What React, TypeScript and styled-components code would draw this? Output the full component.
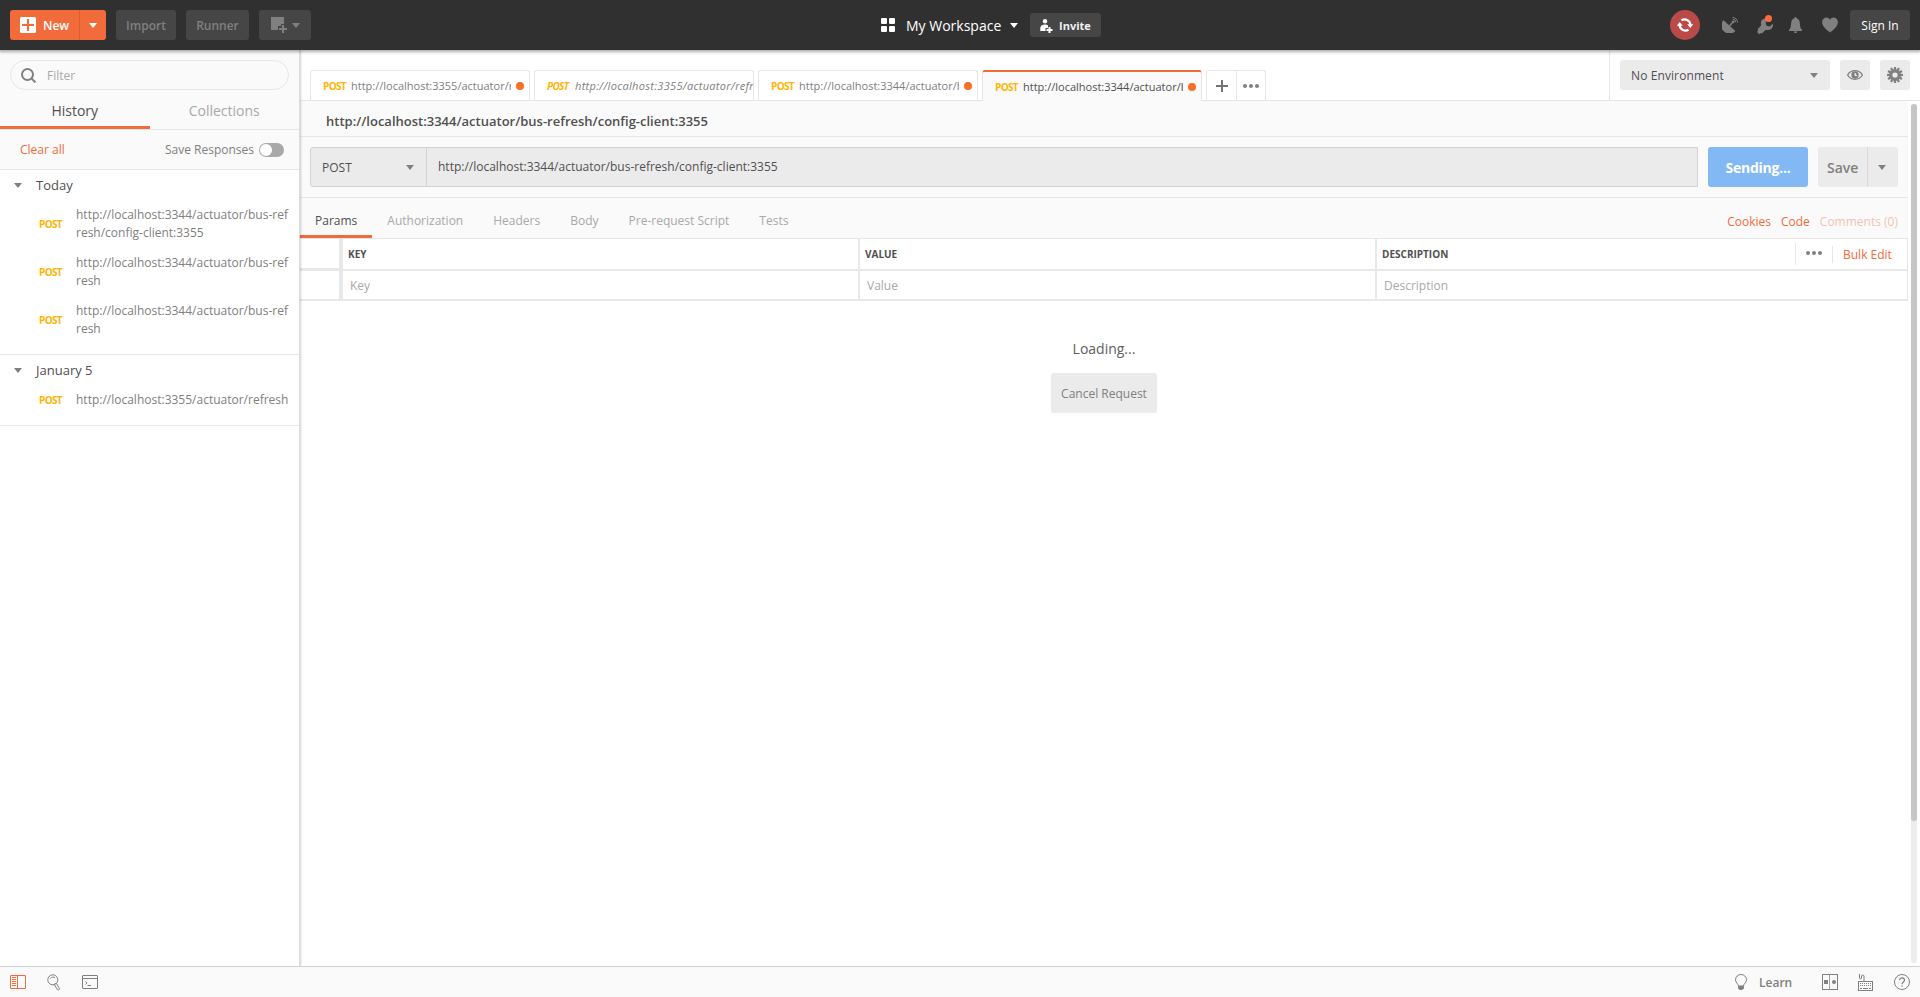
import React from 'react';
import styled, { createGlobalStyle, css } from 'styled-components';

const ORANGE = '#f26b3a';
const LINE = '#e6e6e6';

const Global = createGlobalStyle`
  * { box-sizing: border-box; }
  html, body { margin: 0; padding: 0; }
  body {
    font-family: "Open Sans", sans-serif;
    font-size: 12px;
    color: #808080;
    background: #fff;
    overflow: hidden;
  }
  svg { display: block; flex: none; }
`;

const Page = styled.div`
  display: flex;
  flex-direction: column;
  height: 100vh;
  min-height: 997px;
`;

const Caret = styled.span<{ $color?: string; $ml?: number }>`
  width: 0;
  height: 0;
  flex: none;
  border: 4px solid transparent;
  border-top: 5px solid ${(p) => p.$color || '#808080'};
  border-bottom: 0;
  margin-left: ${(p) => p.$ml || 0}px;
`;

/* ---------- header ---------- */
const Header = styled.header`
  position: relative;
  z-index: 3;
  display: flex;
  align-items: center;
  height: 50px;
  flex: none;
  padding: 0 10px;
  background: #303030;
  box-shadow: 0 1px 3px 1px rgba(0, 0, 0, 0.32);
`;

const NewButton = styled.div`
  display: flex;
  width: 96px;
  height: 30px;
  border-radius: 3px;
  background: ${ORANGE};
  color: #fff;
  font-weight: 600;
`;
const NewMain = styled.div`
  display: flex;
  align-items: center;
  gap: 7px;
  width: 70px;
  padding-left: 10px;
  border-right: 1px solid #d95f33;
`;
const NewLabel = styled.span`
  padding-top: 1px;
`;
const NewCaret = styled.div`
  display: flex;
  flex: 1;
  align-items: center;
  justify-content: center;
`;
const DarkButton = styled.div<{ $w: number; $h?: number; $light?: boolean; $ml?: number }>`
  display: flex;
  align-items: center;
  justify-content: center;
  width: ${(p) => p.$w}px;
  height: ${(p) => p.$h || 30}px;
  margin-left: ${(p) => p.$ml ?? 10}px;
  padding-top: 1px;
  border-radius: 3px;
  background: #464646;
  color: ${(p) => (p.$light ? '#fff' : '#808080')};
  font-weight: ${(p) => (p.$light ? 400 : 600)};
`;
const InviteLabel = styled.span`
  margin-left: 6px;
  font-size: 11px;
  font-weight: 700;
  color: #f0f0f0;
`;
const Workspace = styled.div`
  display: flex;
  align-items: center;
  margin-left: 570px;
  width: 149px;
  color: #fff;
  font-size: 14px;
`;
const WorkspaceName = styled.span`
  width: 96px;
  margin-left: 11px;
  padding-top: 1px;
  white-space: nowrap;
`;
const HeaderIcons = styled.div`
  display: flex;
  align-items: center;
  margin-left: auto;
`;
const Sync = styled.div`
  display: flex;
  align-items: center;
  justify-content: center;
  width: 30px;
  height: 30px;
  margin-right: 22px;
  border-radius: 50%;
  background: #b94a48;
`;
const IconSlot = styled.div<{ $w: number; $mr: number }>`
  width: ${(p) => p.$w}px;
  margin-right: ${(p) => p.$mr}px;
`;

/* ---------- sidebar ---------- */
const Body = styled.div`
  display: flex;
  flex: 1;
  min-height: 0;
`;
const Sidebar = styled.aside`
  position: relative;
  z-index: 2;
  width: 300px;
  flex: none;
  background: #fff;
  border-right: 1px solid #dcdcdc;
  box-shadow: 1px 0 2px rgba(0, 0, 0, 0.18);
`;
const SideTop = styled.div`
  height: 120px;
  padding-top: 10px;
  background: #fafafa;
  border-bottom: 1px solid ${LINE};
`;
const Filter = styled.div`
  display: flex;
  align-items: center;
  gap: 11px;
  width: 279px;
  height: 30px;
  margin-left: 10px;
  padding-left: 10px;
  border: 1px solid ${LINE};
  border-radius: 15px;
  color: #a9a9a9;
`;
const SideTabs = styled.div`
  display: flex;
  height: 40px;
  border-bottom: 1px solid ${LINE};
`;
const SideTab = styled.div<{ $active?: boolean }>`
  width: 150px;
  height: 39px;
  line-height: 42px;
  text-align: center;
  font-size: 14px;
  color: ${(p) => (p.$active ? '#505050' : '#a9a9a9')};
  box-shadow: ${(p) => (p.$active ? `inset 0 -3px 0 ${ORANGE}` : 'none')};
`;
const SideActions = styled.div`
  display: flex;
  align-items: center;
  height: 39px;
  padding: 0 15px 0 20px;
  justify-content: space-between;
`;
const OrangeText = styled.span<{ $faded?: boolean; $ml?: number }>`
  color: ${ORANGE};
  opacity: ${(p) => (p.$faded ? 0.4 : 1)};
  margin-left: ${(p) => p.$ml || 0}px;
`;
const SaveResponses = styled.span`
  display: flex;
  align-items: center;
  gap: 5px;
`;
const Toggle = styled.span`
  width: 25px;
  height: 14px;
  border-radius: 7px;
  padding: 1px;
  background: #a9a9a9;
  &::before {
    content: '';
    display: block;
    width: 12px;
    height: 12px;
    border-radius: 50%;
    background: #fff;
  }
`;
const Group = styled.section`
  padding-bottom: 10px;
  border-bottom: 1px solid ${LINE};
`;
const GroupTitle = styled.div`
  display: flex;
  align-items: center;
  gap: 14px;
  height: 30px;
  padding: 0 0 0 14px;
  font-size: 13px;
  line-height: 18px;
  color: #505050;
`;
const Entry = styled.div`
  display: flex;
  align-items: center;
  padding: 6px 10px 6px 39px;
`;
const EntryUrl = styled.div`
  width: 214px;
  line-height: 18px;
  word-break: break-all;
`;
const Method = styled.span<{ $w: number }>`
  width: ${(p) => p.$w}px;
  flex: none;
  font-size: 10px;
  line-height: 14px;
  letter-spacing: -0.65px;
  font-weight: 700;
  color: #ffb400;
`;

/* ---------- main ---------- */
const Main = styled.main`
  display: flex;
  flex-direction: column;
  flex: 1;
  min-width: 0;
`;
const TopRow = styled.div`
  display: flex;
  height: 51px;
  flex: none;
  border-bottom: 1px solid ${LINE};
`;
const Tabs = styled.div`
  display: flex;
  flex: 1;
  gap: 4px;
  padding: 20px 0 0 10px;
`;
const Tab = styled.div<{ $active?: boolean; $italic?: boolean }>`
  display: flex;
  align-items: center;
  width: 220px;
  height: 30px;
  padding: 0 5px 0 12px;
  border: 1px solid ${LINE};
  border-bottom: 0;
  border-radius: 3px 3px 0 0;
  font-size: 11px;
  line-height: 15px;
  ${(p) => p.$italic && css`font-style: italic; letter-spacing: 0.31px; padding-right: 0;`}
  ${(p) =>
    p.$active &&
    css`
      height: 31px;
      border-top: 2px solid ${ORANGE};
      background: #fafafa;
      color: #505050;
    `}
`;
const TabUrl = styled.span`
  flex: 1;
  min-width: 0;
  overflow: hidden;
  white-space: nowrap;
`;
const Dot = styled.span`
  width: 8px;
  height: 8px;
  margin-left: 5px;
  border-radius: 50%;
  background: #f47023;
`;
const TabTools = styled.div`
  display: flex;
  width: 60px;
  height: 30px;
  border: 1px solid ${LINE};
  border-bottom: 0;
  border-radius: 3px 3px 0 0;
`;
const TabTool = styled.div<{ $line?: boolean }>`
  display: flex;
  width: ${(p) => (p.$line ? 30 : 28)}px;
  align-items: center;
  justify-content: center;
  padding-left: ${(p) => (p.$line ? 1 : 0)}px;
  border-right: ${(p) => (p.$line ? `1px solid ${LINE}` : '0')};
`;
const Env = styled.div`
  display: flex;
  gap: 10px;
  width: 311px;
  padding: 10px;
  border-left: 1px solid ${LINE};
`;
const EnvSelect = styled.div`
  display: flex;
  align-items: center;
  justify-content: space-between;
  width: 210px;
  height: 30px;
  padding: 1px 12px 0 11px;
  border-radius: 3px;
  background: #ebebeb;
  color: #505050;
  letter-spacing: 0.1px;
`;
const EnvButton = styled.div`
  display: flex;
  align-items: center;
  justify-content: center;
  width: 30px;
  height: 30px;
  border-radius: 3px;
  background: #ebebeb;
`;
const Scroller = styled.div`
  display: flex;
  flex: 1;
  min-height: 0;
`;
const Content = styled.div`
  width: 1608px;
`;
const Bar = styled.div`
  width: 12px;
  padding: 3px;
`;
const Track = styled.div`
  height: 100%;
  border-radius: 3px;
  background: #ececec;
`;
const Thumb = styled.div`
  height: 717px;
  border-radius: 3px;
  background: #c6c6c6;
`;
const Title = styled.div`
  height: 36px;
  padding-left: 26px;
  line-height: 41px;
  background: #fafafa;
  border-bottom: 1px solid ${LINE};
  font-size: 13px;
  font-weight: 600;
  color: #505050;
`;
const RequestRow = styled.div`
  display: flex;
  gap: 10px;
  height: 61px;
  padding: 10px;
  background: #fafafa;
  border-bottom: 1px solid ${LINE};
`;
const UrlBox = styled.div`
  display: flex;
  width: 1388px;
  height: 40px;
  border: 1px solid #d2d2d2;
  border-radius: 3px 0 0 3px;
  background: #ebebeb;
  color: #505050;
`;
const MethodSelect = styled.div`
  display: flex;
  align-items: center;
  justify-content: space-between;
  width: 116px;
  padding: 1px 12px 0 11px;
  border-right: 1px solid #d2d2d2;
  font-weight: 500;
`;
const Url = styled.div`
  padding-left: 11px;
  line-height: 38px;
`;
const Send = styled.div`
  width: 100px;
  height: 40px;
  border-radius: 3px;
  line-height: 42px;
  text-align: center;
  font-size: 14px;
  font-weight: 700;
  letter-spacing: -0.25px;
  color: #fff;
  background: #82b8f3;
`;
const Save = styled.div`
  display: flex;
  width: 80px;
  height: 40px;
  border-radius: 3px;
  background: #ebebeb;
  font-size: 14px;
  font-weight: 600;
`;
const SaveMain = styled.div`
  width: 50px;
  padding-left: 9px;
  line-height: 42px;
  border-right: 1px solid #dadada;
`;
const SaveCaret = styled.div`
  display: flex;
  flex: 1;
  align-items: center;
  padding-left: 10px;
`;
const SectionTabs = styled.div`
  display: flex;
  height: 41px;
  padding-right: 10px;
  background: #fafafa;
  border-bottom: 1px solid ${LINE};
`;
const SectionTab = styled.div<{ $active?: boolean }>`
  height: 40px;
  padding: 0 15px;
  line-height: 46px;
  color: ${(p) => (p.$active ? '#505050' : '#a9a9a9')};
  box-shadow: ${(p) => (p.$active ? `inset 0 -3px 0 ${ORANGE}` : 'none')};
`;
const Links = styled.div`
  margin-left: auto;
  line-height: 47px;
`;
const Grid = styled.div`
  border-right: 1px solid ${LINE};
`;
const GridRow = styled.div<{ $h: number }>`
  display: grid;
  grid-template-columns: 43px 517px 517px 1fr;
  height: ${(p) => p.$h}px;
  border-bottom: 2px solid #e8e8e8;
`;
const CheckCell = styled.div<{ $head?: boolean }>`
  border-right: 4px solid #e8e8e8;
  border-bottom: ${(p) => (p.$head ? '1px solid #e8e8e8' : '0')};
`;
const HeadCell = styled.div<{ $last?: boolean }>`
  display: flex;
  align-items: center;
  padding: 0 0 0 5px;
  border-right: ${(p) => (p.$last ? '0' : '2px solid #e8e8e8')};
  font-size: 10px;
  line-height: 14px;
  font-weight: 700;
  color: #505050;
`;
const Cell = styled(HeadCell)`
  padding: 1px 0 0 7px;
  font-size: 12px;
  line-height: 17px;
  font-weight: 400;
  color: #a9a9a9;
`;
const GridTools = styled.div`
  display: flex;
  align-items: center;
  width: 112px;
  margin-left: auto;
  font-size: 12px;
  font-weight: 400;
`;
const More = styled.div`
  display: flex;
  align-items: center;
  justify-content: center;
  width: 37px;
  height: 22px;
  padding-bottom: 2px;
  border-left: 1px solid ${LINE};
`;
const Bulk = styled.div`
  height: 17px;
  padding-left: 10px;
  line-height: 17px;
  border-left: 1px solid ${LINE};
  color: ${ORANGE};
`;
const Loading = styled.div`
  display: flex;
  flex-direction: column;
  align-items: center;
  padding-top: 38px;
  font-size: 14px;
  line-height: 20px;
  color: #606060;
`;
const Cancel = styled.div`
  width: 106px;
  height: 40px;
  margin-top: 14px;
  border-radius: 3px;
  background: #ebebeb;
  line-height: 41px;
  text-align: center;
  font-size: 12px;
  color: #808080;
`;

/* ---------- footer ---------- */
const Footer = styled.footer`
  position: relative;
  z-index: 3;
  display: flex;
  align-items: center;
  justify-content: space-between;
  height: 31px;
  flex: none;
  padding: 0 10px;
  border-top: 1px solid #d2d2d2;
  background: #fafafa;
`;
const FootGroup = styled.div`
  display: flex;
  align-items: center;
`;
const FootIcon = styled.div<{ $mr?: number }>`
  margin-right: ${(p) => p.$mr || 0}px;
`;
const Learn = styled.span`
  width: 63px;
  padding-top: 1px;
  font-size: 12px;
  font-weight: 600;
`;

/* ---------- icons ---------- */
const Dots = () => (
  <svg width="16" height="4" viewBox="0 0 16 4" fill="#808080">
    <circle cx="2" cy="2" r="2" /><circle cx="8" cy="2" r="2" /><circle cx="14" cy="2" r="2" />
  </svg>
);
const PlusBox = () => (
  <svg width="16" height="16" viewBox="0 0 16 16">
    <rect width="16" height="16" rx="1.5" fill="#fff" />
    <path d="M8 2v12M2 8h12" stroke={ORANGE} strokeWidth="2" />
  </svg>
);
const WindowPlus = () => (
  <svg width="17" height="17" viewBox="0 0 17 17">
    <path d="M0 0h13v7h-3v2H7v4H0z" fill="#808080" />
    <path d="M12 8v8M8 12h8" stroke="#808080" strokeWidth="2" />
  </svg>
);
const Squares = () => (
  <svg width="14" height="14" viewBox="0 0 14 14" fill="#fff">
    <rect width="6" height="6" rx="1" /><rect x="8" width="6" height="6" rx="1" />
    <rect y="8" width="6" height="6" rx="1" /><rect x="8" y="8" width="6" height="6" rx="1" />
  </svg>
);
const PersonPlus = () => (
  <svg width="13" height="15" viewBox="0 -1 13 15" fill="#fff">
    <circle cx="5" cy="2.3" r="2.2" />
    <path d="M0.3 12V9.300C.3 6.800 2 5.500 5 5.500c1.300 0 2.300.2 3 .8V9H5.500v3z" />
    <path d="M9.500 8v6M6.500 11h6" stroke="#fff" strokeWidth="2" />
  </svg>
);
const SyncIcon = () => (
  <svg width="16" height="16" viewBox="0 0 16 16" fill="none" stroke="#fff" strokeWidth="2.2">
    <path d="M4.400 3.300A6 6 0 0 1 13.500 8.200M11.600 12.700A6 6 0 0 1 2.500 7.800" />
    <path d="M10.200 7.300h6L13.300 11zM-.2 8.700h6L2.700 5z" fill="#fff" stroke="none" />
  </svg>
);
const Satellite = () => (
  <svg width="16" height="16" viewBox="0 0 16 16">
    <path d="M1.500 3.200 13.400 14A8 8 0 0 1 1.500 3.200z" fill="#808080" />
    <path d="M7 9.500 11 5" stroke="#808080" strokeWidth="1.4" />
    <circle cx="11.200" cy="4.800" r="1.400" fill="#808080" />
    <path d="M10.800 2.300a3 3 0 0 1 3 3M10.500.5a5 5 0 0 1 5.100 5" stroke="#808080" strokeWidth="1" fill="none" />
  </svg>
);
const Wrench = () => (
  <svg width="17" height="20" viewBox="0 0 17 20">
    <path d="M9.500 3.600C6 2.800 3.200 5.600 4 9.200c.2.900.1 1.300-.4 1.800L.8 14l.2 1.300-.9 1.600 2.100 2.300 1.800-1.100 1.300.1 2.600-2.800c.5-.5 1-.6 1.900-.4 3.700.6 7-2.400 6-6.200l-3.100 2.800-3.200-.8-.8-3.100z" fill="#808080" />
    <circle cx="11.500" cy="3.500" r="3.500" fill="#ff6c37" />
  </svg>
);
const Bell = () => (
  <svg width="13" height="16" viewBox="0 0 13 16" fill="#808080">
    <path d="M6.500 0c.7 0 1 .5 1 1.300C10 2 10.800 4 10.900 6.500c.1 3.200.6 5 2.100 6.500v1H0v-1c1.500-1.500 2-3.300 2.100-6.500C2.200 4 3 2 5.500 1.300 5.500.5 5.800 0 6.500 0zM4.800 14.400h3.400c-.1 1-.8 1.500-1.700 1.500s-1.600-.5-1.700-1.500z" />
  </svg>
);
const Heart = () => (
  <svg width="16" height="16" viewBox="0 0 16 16" fill="#808080">
    <path d="M8 2.800C9.300.2 12-.1 13.800 1.200c2.500 1.800 2.700 4.900.9 7.700C13.200 11.200 10.500 13.500 8 15.600 5.500 13.500 2.800 11.200 1.300 8.900-.5 6.100-.3 3 2.200 1.200 4-.1 6.700.2 8 2.800z" />
  </svg>
);
const Search = () => (
  <svg width="15" height="15" viewBox="0 0 15 15" fill="none" stroke="#808080" strokeWidth="2">
    <circle cx="6.500" cy="6.500" r="5.500" /><path d="m10.400 10.400 4 4" />
  </svg>
);
const Eye = () => (
  <svg width="16" height="10" viewBox="0 0 16 10">
    <path d="M.6 5C2.300 2 5 .7 8 .7S13.700 2 15.400 5C13.700 8 11 9.300 8 9.300S2.300 8 .6 5z" fill="#ebebeb" stroke="#808080" strokeWidth="1.3" />
    <circle cx="8" cy="5" r="3.700" fill="#808080" />
    <path d="M8.200 3v2.300h1.700" stroke="#ebebeb" strokeWidth="1.3" fill="none" />
  </svg>
);
const Gear = () => (
  <svg width="16" height="16" viewBox="-8 -8 16 16">
    {[0, 30, 60, 90, 120, 150].map((a) => (
      <rect key={a} x="-1.100" y="-8" width="2.200" height="16" fill="#808080" transform={`rotate(${a})`} />
    ))}
    <circle r="6" fill="#808080" /><circle r="2.600" fill="#ebebeb" />
  </svg>
);
const Plus = () => (
  <svg width="12" height="12" viewBox="0 0 12 12">
    <path d="M6 0v12M0 6h12" stroke="#747474" strokeWidth="2" />
  </svg>
);
const PanelIcon = () => (
  <svg width="16" height="14" viewBox="0 0 16 14" fill="none" stroke={ORANGE}>
    <rect x=".5" y=".5" width="15" height="13" rx=".5" />
    <path d="M7.500 0v14M2 2.500h4M2 4.500h4M2 6.500h4M2 8.500h4M2 10.500h4" />
  </svg>
);
const Magnifier = () => (
  <svg width="14" height="17" viewBox="0 0 14 17" fill="none" stroke="#808080">
    <circle cx="5.800" cy="5.800" r="5" />
    <path d="M3.500 4.500c1-1.600 3.200-1.800 4.500-.6M7 10.300l1.500-.9M7.300 10.400l3 5.200c.8 1 2.600 0 2.100-1.200L9.300 9.300" />
  </svg>
);
const ConsoleIcon = () => (
  <svg width="16" height="14" viewBox="0 0 16 14" fill="none" stroke="#808080">
    <rect x=".5" y=".5" width="15" height="13" rx=".5" />
    <path d="M1 3.500h14M3.500 6.500l1.500 1.500-1.500 1.500M5.500 10.500h3.500" />
  </svg>
);
const Bulb = () => (
  <svg width="12" height="16" viewBox="0 0 12 16" fill="none" stroke="#808080">
    <path d="M3.500 12c0-2.200-3-3.200-3-6.200a5.500 5.300 0 0 1 11 0c0 3-3 4-3 6.200z" />
    <path d="M3.500 12.500h5v1.700L7.300 15.500H4.700l-1.200-1.300z" fill="#808080" />
  </svg>
);
const TwoPane = () => (
  <svg width="16" height="16" viewBox="0 0 16 16" fill="none" stroke="#808080">
    <rect x=".5" y=".5" width="15" height="15" /><path d="M7.500 0v16" stroke="#a0a0a0" />
    <rect x="2" y="6" width="4" height="4" fill="#808080" stroke="none" />
    <circle cx="12" cy="8" r="2" fill="#808080" stroke="none" />
  </svg>
);
const Keyboard = () => (
  <svg width="15" height="17" viewBox="0 0 15 17" fill="none" stroke="#808080">
    <path d="M1.500 0v4c0 1.200 2 1.200 2 0V2c0-1.200 2.500-1.200 2.500 0v5" />
    <rect x=".5" y="7.500" width="14" height="9" />
    <path d="M2 9.500h11M2 11.500h11" strokeDasharray="1 1" /><path d="M2 14.500h2M5 14.500h5M11 14.500h2" />
  </svg>
);
const Help = () => (
  <svg width="16" height="16" viewBox="0 0 16 16" fill="none" stroke="#808080">
    <circle cx="8" cy="8" r="7.500" />
    <path d="M5.600 6.200c0-3.200 4.900-3 4.900 0C10.500 7.900 8 8 8 10.200M8 11.500v1.300" strokeWidth="1.2" />
  </svg>
);

const history = [
  {
    title: 'Today',
    items: [
      'http://localhost:3344/actuator/bus-refresh/config-client:3355',
      'http://localhost:3344/actuator/bus-refresh',
      'http://localhost:3344/actuator/bus-refresh',
    ],
  },
  { title: 'January 5', items: ['http://localhost:3355/actuator/refresh'] },
];
const tabs = [
  { url: 'http://localhost:3355/actuator/refresh', dot: true },
  { url: 'http://localhost:3355/actuator/refresh', italic: true },
  { url: 'http://localhost:3344/actuator/bus-refresh', dot: true },
  { url: 'http://localhost:3344/actuator/bus-refresh', dot: true, active: true },
];
const sections = ['Params', 'Authorization', 'Headers', 'Body', 'Pre-request Script', 'Tests'];
const requestUrl = 'http://localhost:3344/actuator/bus-refresh/config-client:3355';

export default function App() {
  return (
    <Page>
      <Global />
      <Header>
        <NewButton>
          <NewMain><PlusBox /><NewLabel>New</NewLabel></NewMain>
          <NewCaret><Caret $color="#fff" /></NewCaret>
        </NewButton>
        <DarkButton $w={60}>Import</DarkButton>
        <DarkButton $w={63}>Runner</DarkButton>
        <DarkButton $w={52}><WindowPlus /><Caret $ml={4} /></DarkButton>
        <Workspace>
          <Squares />
          <WorkspaceName>My Workspace</WorkspaceName>
          <Caret $color="#fff" $ml={8} />
        </Workspace>
        <DarkButton $w={71} $h={24} $light $ml={0}><PersonPlus /><InviteLabel>Invite</InviteLabel></DarkButton>
        <HeaderIcons>
          <Sync><SyncIcon /></Sync>
          <IconSlot $w={16} $mr={19}><Satellite /></IconSlot>
          <IconSlot $w={17} $mr={15}><Wrench /></IconSlot>
          <IconSlot $w={13} $mr={20}><Bell /></IconSlot>
          <IconSlot $w={16} $mr={12}><Heart /></IconSlot>
          <DarkButton $w={60} $light $ml={0}>Sign In</DarkButton>
        </HeaderIcons>
      </Header>
      <Body>
        <Sidebar>
          <SideTop>
            <Filter><Search />Filter</Filter>
            <SideTabs>
              <SideTab $active>History</SideTab>
              <SideTab>Collections</SideTab>
            </SideTabs>
            <SideActions>
              <OrangeText>Clear all</OrangeText>
              <SaveResponses>Save Responses<Toggle /></SaveResponses>
            </SideActions>
          </SideTop>
          {history.map((g) => (
            <Group key={g.title}>
              <GroupTitle><Caret />{g.title}</GroupTitle>
              {g.items.map((u, i) => (
                <Entry key={i}><Method $w={37}>POST</Method><EntryUrl>{u}</EntryUrl></Entry>
              ))}
            </Group>
          ))}
        </Sidebar>
        <Main>
          <TopRow>
            <Tabs>
              {tabs.map((t, i) => (
                <Tab key={i} $active={t.active} $italic={t.italic}>
                  <Method $w={28}>POST</Method>
                  <TabUrl>{t.url}</TabUrl>
                  {t.dot && <Dot />}
                </Tab>
              ))}
              <TabTools>
                <TabTool $line><Plus /></TabTool>
                <TabTool><Dots /></TabTool>
              </TabTools>
            </Tabs>
            <Env>
              <EnvSelect>No Environment<Caret /></EnvSelect>
              <EnvButton><Eye /></EnvButton>
              <EnvButton><Gear /></EnvButton>
            </Env>
          </TopRow>
          <Scroller>
            <Content>
              <Title>{requestUrl}</Title>
              <RequestRow>
                <UrlBox>
                  <MethodSelect>POST<Caret /></MethodSelect>
                  <Url>{requestUrl}</Url>
                </UrlBox>
                <Send>Sending...</Send>
                <Save><SaveMain>Save</SaveMain><SaveCaret><Caret /></SaveCaret></Save>
              </RequestRow>
              <SectionTabs>
                {sections.map((s, i) => <SectionTab key={s} $active={i === 0}>{s}</SectionTab>)}
                <Links>
                  <OrangeText>Cookies</OrangeText>
                  <OrangeText $ml={10}>Code</OrangeText>
                  <OrangeText $ml={10} $faded>Comments (0)</OrangeText>
                </Links>
              </SectionTabs>
              <Grid>
                <GridRow $h={32}>
                  <CheckCell $head />
                  <HeadCell>KEY</HeadCell>
                  <HeadCell>VALUE</HeadCell>
                  <HeadCell $last>
                    DESCRIPTION
                    <GridTools><More><Dots /></More><Bulk>Bulk Edit</Bulk></GridTools>
                  </HeadCell>
                </GridRow>
                <GridRow $h={30}>
                  <CheckCell />
                  <Cell>Key</Cell>
                  <Cell>Value</Cell>
                  <Cell $last>Description</Cell>
                </GridRow>
              </Grid>
              <Loading>Loading...<Cancel>Cancel Request</Cancel></Loading>
            </Content>
            <Bar><Track><Thumb /></Track></Bar>
          </Scroller>
        </Main>
      </Body>
      <Footer>
        <FootGroup>
          <FootIcon $mr={21}><PanelIcon /></FootIcon>
          <FootIcon $mr={21}><Magnifier /></FootIcon>
          <FootIcon><ConsoleIcon /></FootIcon>
        </FootGroup>
        <FootGroup>
          <FootIcon $mr={12}><Bulb /></FootIcon>
          <Learn>Learn</Learn>
          <FootIcon $mr={20}><TwoPane /></FootIcon>
          <FootIcon $mr={21}><Keyboard /></FootIcon>
          <FootIcon><Help /></FootIcon>
        </FootGroup>
      </Footer>
    </Page>
  );
}
